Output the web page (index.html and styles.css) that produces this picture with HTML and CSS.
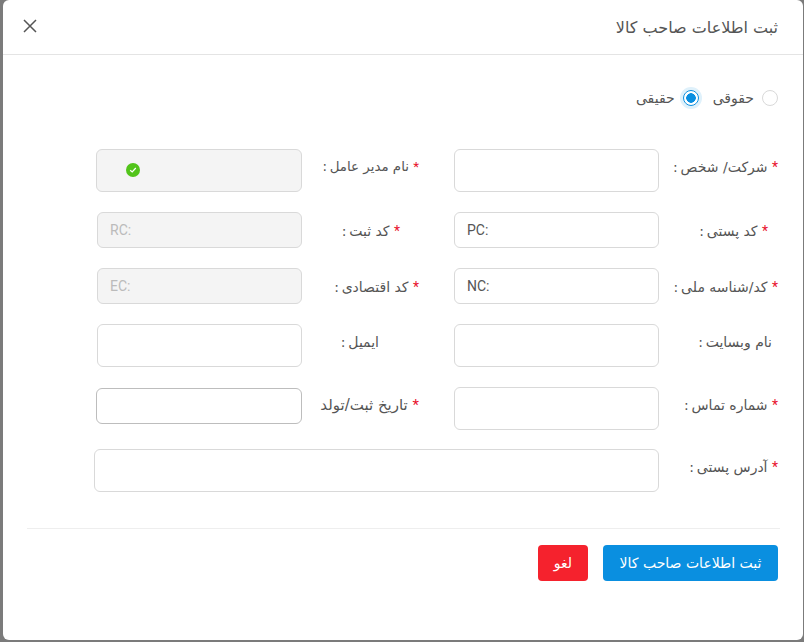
FILE: index.html
```html
<!DOCTYPE html>
<html lang="fa" dir="rtl">
<head>
<meta charset="utf-8">
<title>ثبت اطلاعات صاحب کالا</title>
<link rel="stylesheet" href="styles.css">
</head>
<body>
<div class="modal">
  <header class="modal-header">
    <h1 class="modal-title">ثبت اطلاعات صاحب کالا</h1>
    <button class="close" type="button" aria-label="بستن">
      <svg width="14" height="14" viewBox="0 0 14 14"><path d="M1 1 L13 13 M13 1 L1 13" stroke="#555" stroke-width="1.5" fill="none"/></svg>
    </button>
  </header>
  <div class="modal-body">
    <div class="radios">
      <label class="radio"><span class="dot"></span><span>حقوقی</span></label>
      <label class="radio"><span class="dot dot-on"></span><span>حقیقی</span></label>
    </div>
    <form class="form">
      <div class="row row-1">
        <label class="label lab-a"><i>*</i> شرکت/ شخص&#8201;:</label>
        <input class="input tall" type="text">
        <label class="label lab-b lab-ceo"><i>*</i> نام مدیر عامل&#8201;:</label>
        <div class="input tall off wide status"><span class="check"><svg width="8" height="8" viewBox="0 0 8 8"><path d="M1.2 4.2 L3.2 6 L6.8 2" stroke="#fff" stroke-width="1.2" fill="none"/></svg></span></div>
      </div>
      <div class="row row-2">
        <label class="label lab-pc"><i>*</i> کد پستی&#8201;:</label>
        <input class="input" type="text" value="PC:" dir="ltr">
        <label class="label lab-rc"><i>*</i> کد ثبت&#8201;:</label>
        <input class="input off" type="text" value="RC:" dir="ltr" disabled>
      </div>
      <div class="row row-3">
        <label class="label lab-a"><i>*</i> کد/شناسه ملی&#8201;:</label>
        <input class="input" type="text" value="NC:" dir="ltr">
        <label class="label lab-b"><i>*</i> کد اقتصادی&#8201;:</label>
        <input class="input off" type="text" value="EC:" dir="ltr" disabled>
      </div>
      <div class="row row-4">
        <label class="label lab-web">نام وبسایت&#8201;:</label>
        <input class="input tall" type="text">
        <label class="label lab-mail">ایمیل&#8201;:</label>
        <input class="input tall" type="text">
      </div>
      <div class="row row-5">
        <label class="label lab-a"><i>*</i> شماره تماس&#8201;:</label>
        <input class="input tall" type="text">
        <label class="label lab-b lab-date"><i>*</i> تاریخ ثبت/تولد</label>
        <input class="input date wide" type="text">
      </div>
      <div class="row row-6">
        <label class="label lab-a"><i>*</i> آدرس پستی&#8201;:</label>
        <textarea class="input tall address"></textarea>
      </div>
    </form>
    <hr class="divider">
    <div class="actions">
      <button class="btn btn-primary" type="button">ثبت اطلاعات صاحب کالا</button>
      <button class="btn btn-danger" type="button">لغو</button>
    </div>
  </div>
</div>
</body>
</html>
```

FILE: styles.css
```css
* { box-sizing: border-box; }
html, body { margin: 0; height: 100%; }
body {
  background: #7b7b7b;
  font-family: "DejaVu Sans", "Roboto", sans-serif;
  font-size: 14px;
  color: #555;
  overflow: hidden;
}
.modal {
  width: 800px;
  height: 640px;
  margin-right: 1px;
  background: #fff;
  border-radius: 6px;
}
.modal-header {
  height: 55px;
  display: flex;
  align-items: center;
  justify-content: space-between;
  padding: 0 25px 0 24px;
  border-bottom: 1px solid #e4e4e4;
}
.modal-title {
  margin: 0;
  font-size: 16px;
  font-weight: 400;
  color: #555;
}
.close {
  width: 14px;
  height: 14px;
  padding: 0;
  margin-left: -4px;
  margin-top: -3px;
  border: 0;
  background: none;
  display: block;
}
.close svg { display: block; }
.modal-body { padding: 0 25px 0 24px; }
.radios {
  display: flex;
  gap: 14px;
  padding-top: 34px;
  height: 94px;
}
.radio {
  display: flex;
  align-items: center;
  gap: 8px;
  height: 18px;
  font-size: 14px;
  color: #555;
}
.dot {
  width: 16px;
  height: 16px;
  border: 1px solid #d9d9d9;
  border-radius: 50%;
  background: #fff;
  flex: none;
}
.dot-on {
  border-color: #0a8fe0;
  background: radial-gradient(circle, #0a8fe0 0 4.5px, #fff 5px);
  box-shadow: 0 0 0 3px #dff1fb;
}
.form { display: flex; flex-direction: column; }
.row {
  display: grid;
  grid-template-columns: 119px 205px 152px 205px;
  align-items: start;
}
.row-2, .row-3, .row-4, .row-5 { margin-top: 20px; }
.row-6 { margin-top: 19px; }
.label {
  white-space: nowrap;
  padding-top: 9px;
  line-height: 18px;
  font-size: 14px;
}
.label i {
  color: #e8112d;
  font-style: normal;
  font-family: "Roboto", sans-serif;
}
.row-2 .label, .row-3 .label { padding-top: 10px; }
.lab-b { padding-right: 35px; }
.lab-pc { padding-right: 10px; }
.lab-rc { padding-right: 54px; }
.lab-web { padding-right: 6px; }
.lab-mail { padding-right: 75px; }
.lab-ceo { font-size: 13.4px; }
.lab-date { font-size: 15px; }
.input {
  display: block;
  width: 205px;
  height: 36px;
  border: 1px solid #d9d9d9;
  border-radius: 6px;
  background: #fff;
  padding: 0 12px;
  font-family: "Roboto", sans-serif;
  font-size: 14px;
  color: #555;
  outline: 0;
  resize: none;
  margin: 0;
}
.tall { height: 43px; }
.off { background: #f4f4f4; color: #bbb; -webkit-text-fill-color: #bbb; opacity: 1; }
.wide { width: 206px; }
.date { border-color: #bdbdbd; margin-top: 1px; }
.address { grid-column: 2 / 5; width: 565px; }
.status { display: flex; align-items: center; padding: 0; }
.check {
  width: 14px;
  height: 14px;
  margin-right: 161px;
  margin-bottom: 2px;
  border-radius: 50%;
  background: #52c41a;
  display: flex;
  align-items: center;
  justify-content: center;
}
.check svg { display: block; }
.divider {
  border: 0;
  border-top: 1px solid #eee;
  margin: 36px -2px 0 0;
  width: 753px;
}
.actions { display: flex; gap: 15px; margin-top: 16px; }
.btn {
  height: 36px;
  border: 0;
  border-radius: 4px;
  color: #fff;
  font-family: "DejaVu Sans", sans-serif;
  font-size: 14px;
  font-weight: 400;
  padding: 0;
}
.btn-primary { background: #0a8fe0; width: 175px; }
.btn-danger { background: #f5222d; width: 50px; }
```
